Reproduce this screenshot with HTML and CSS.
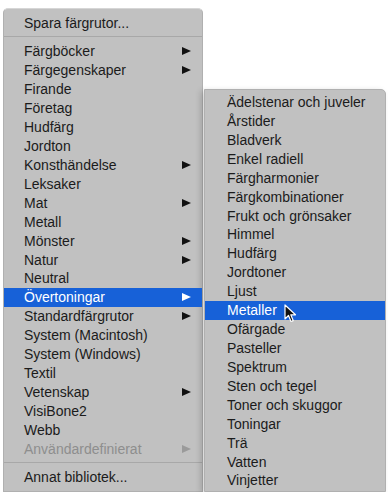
FILE: index.html
```html
<!DOCTYPE html>
<html lang="sv">
<head>
    <meta charset="UTF-8">
    <title>Färgrutor</title>
    <link rel="stylesheet" href="styles.css">
</head>
<body>
    <div class="menus">
        <ul class="menu main-menu">
            <li class="item">Spara färgrutor...</li>
            <li class="sep"></li>
            <li class="item sub">Färgböcker</li>
            <li class="item sub">Färgegenskaper</li>
            <li class="item">Firande</li>
            <li class="item">Företag</li>
            <li class="item">Hudfärg</li>
            <li class="item">Jordton</li>
            <li class="item sub">Konsthändelse</li>
            <li class="item">Leksaker</li>
            <li class="item sub">Mat</li>
            <li class="item">Metall</li>
            <li class="item sub">Mönster</li>
            <li class="item sub">Natur</li>
            <li class="item">Neutral</li>
            <li class="item sub active">Övertoningar</li>
            <li class="item sub">Standardfärgrutor</li>
            <li class="item">System (Macintosh)</li>
            <li class="item">System (Windows)</li>
            <li class="item">Textil</li>
            <li class="item sub">Vetenskap</li>
            <li class="item">VisiBone2</li>
            <li class="item">Webb</li>
            <li class="item sub disabled">Användardefinierat</li>
            <li class="sep"></li>
            <li class="item">Annat bibliotek...</li>
        </ul>
        <ul class="menu sub-menu">
            <li class="item">Ädelstenar och juveler</li>
            <li class="item">Årstider</li>
            <li class="item">Bladverk</li>
            <li class="item">Enkel radiell</li>
            <li class="item">Färgharmonier</li>
            <li class="item">Färgkombinationer</li>
            <li class="item">Frukt och grönsaker</li>
            <li class="item">Himmel</li>
            <li class="item">Hudfärg</li>
            <li class="item">Jordtoner</li>
            <li class="item">Ljust</li>
            <li class="item active">Metaller
                <svg class="cursor" width="13" height="19" viewBox="0 0 13 19">
                    <path d="M1 1 L1 15 L4.5 11.5 L7 17.5 L9.2 16.6 L6.8 10.8 L11.5 10.8 Z" fill="#111" stroke="#fff" stroke-width="1.2" stroke-linejoin="round"/>
                </svg>
            </li>
            <li class="item">Ofärgade</li>
            <li class="item">Pasteller</li>
            <li class="item">Spektrum</li>
            <li class="item">Sten och tegel</li>
            <li class="item">Toner och skuggor</li>
            <li class="item">Toningar</li>
            <li class="item">Trä</li>
            <li class="item">Vatten</li>
            <li class="item">Vinjetter</li>
        </ul>
    </div>
</body>
</html>
```

FILE: styles.css
```css
body {
    margin: 0;
    background: #fff;
    font-family: "Liberation Sans", Arial, sans-serif;
    font-size: 14px;
    color: #1b1b1b;
}
.menus {
    display: flex;
    align-items: flex-start;
    padding: 8px 0 0 3px;
    gap: 1px;
}
.menu {
    list-style: none;
    margin: 0;
    background: #c1c1c1;
    border: 1px solid #b0b0b0;
}
.main-menu {
    width: 198px;
    padding: 5px 0 0;
    height: 477px;
    border-radius: 5px 5px 0 0;
    border-top-color: #d6d6d6;
}
.sub-menu {
    width: 180px;
    margin-top: 81px;
    padding: 3px 0 0;
    height: 398px;
    border-radius: 0 5px 0 0;
    box-shadow: -3px 2px 6px rgba(0, 0, 0, 0.18);
}
.item {
    position: relative;
    height: 18.93px;
    line-height: 19px;
    padding-left: 20px;
    white-space: nowrap;
}
.sub-menu .item {
    padding-left: 22px;
}
.sub::after {
    content: "";
    position: absolute;
    right: 11px;
    top: 5px;
    border-left: 9px solid #111;
    border-top: 4.5px solid transparent;
    border-bottom: 4.5px solid transparent;
}
.active {
    background: #1761d8;
    color: #fff;
}
.active.sub::after {
    border-left-color: #fff;
}
.disabled {
    color: #8e8e8e;
}
.disabled.sub::after {
    border-left-color: #9a9a9a;
}
.sep {
    height: 1px;
    background: #a8a8a8;
    margin: 3.5px 0 5px;
}
.cursor {
    position: absolute;
    left: 79px;
    top: 3px;
}
```
